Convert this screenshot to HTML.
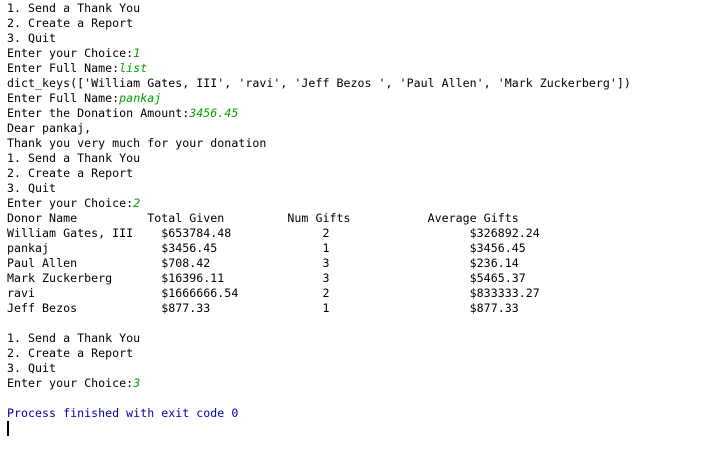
<!DOCTYPE html>
<html><head><style>
html,body{margin:0;background:#fff;width:717px;height:472px;overflow:hidden}
pre{margin:0;padding:1px 0 0 7px;font-family:"DejaVu Sans Mono","Liberation Mono",monospace;font-size:11.6px;letter-spacing:0.03px;line-height:15px;color:#000}
i{color:#00a000}
.b{color:#0000b0}
.c{display:inline-block;width:2px;height:15px;background:#000;vertical-align:top}
</style></head><body><pre>1. Send a Thank You
2. Create a Report
3. Quit
Enter your Choice:<i>1</i>
Enter Full Name:<i>list</i>
dict_keys(['William Gates, III', 'ravi', 'Jeff Bezos ', 'Paul Allen', 'Mark Zuckerberg'])
Enter Full Name:<i>pankaj</i>
Enter the Donation Amount:<i>3456.45</i>
Dear pankaj,
Thank you very much for your donation
1. Send a Thank You
2. Create a Report
3. Quit
Enter your Choice:<i>2</i>
Donor Name          Total Given         Num Gifts           Average Gifts
William Gates, III    $653784.48             2                    $326892.24
pankaj                $3456.45               1                    $3456.45
Paul Allen            $708.42                3                    $236.14
Mark Zuckerberg       $16396.11              3                    $5465.37
ravi                  $1666666.54            2                    $833333.27
Jeff Bezos            $877.33                1                    $877.33

1. Send a Thank You
2. Create a Report
3. Quit
Enter your Choice:<i>3</i>

<span class="b">Process finished with exit code 0</span>
<span class="c"></span></pre></body></html>
